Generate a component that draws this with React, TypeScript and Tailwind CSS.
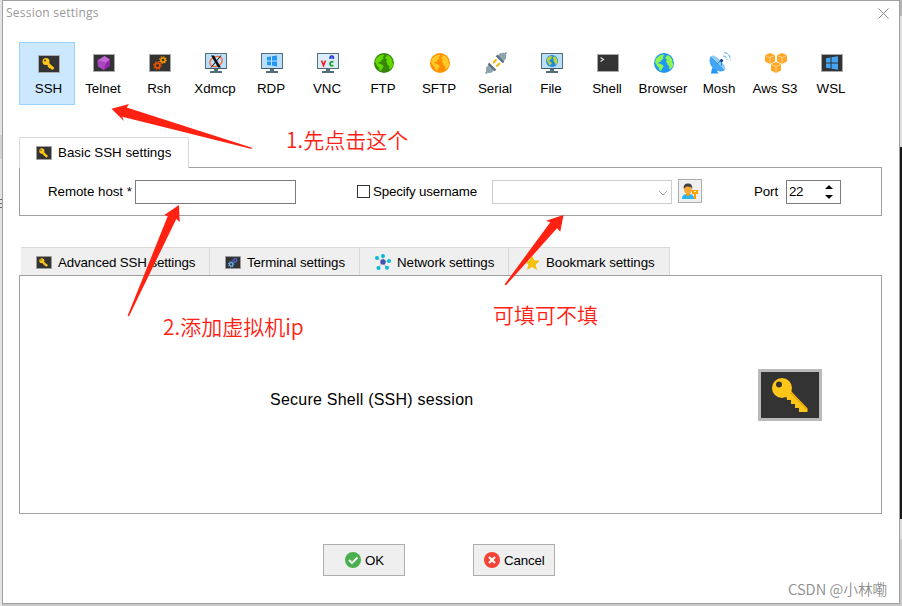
import React from "react";

type IconProps = { className?: string };

const ui = "font-['Liberation_Sans',Arial,sans-serif]";
const cjk = "font-['Noto_Sans_CJK_SC',sans-serif]";

function KeyShape() {
  return (
    <>
      <path d="M28 25 33 22 49.500 39.500V43H41V39H37V35H33V31H29Z" fill="#ffc61a" />
      <path d="M32 23 49 40" stroke="#e5a500" strokeWidth="1.600" />
      <path fillRule="evenodd" d="M24 9a10 10 0 1 0 0 20 10 10 0 0 0 0-20Zm-3 3.500a3 3 0 1 1 0 6 3 3 0 0 1 0-6Z" fill="#ffc61a" />
    </>
  );
}

function KeyIcon({ className = "h-[18px] w-[22px]" }: IconProps) {
  return (
    <svg className={className} viewBox="0 0 64 52" preserveAspectRatio="none" fill="none">
      <rect width="64" height="52" fill="#bababa" />
      <rect x="3" y="3" width="58" height="46" fill="#333" />
      <KeyShape />
    </svg>
  );
}

function SmallKey({ className = "h-[18px] w-[22px]" }: IconProps) {
  return (
    <svg className={className} viewBox="0 0 22 18" preserveAspectRatio="none" fill="none">
      <rect x=".5" y=".5" width="21" height="17" fill="#333" stroke="#aaa" />
      <path d="m8.500 7.500 7 6.500" stroke="#ffc61a" strokeWidth="2.800" />
      <path d="m10 11 2 2m0-1 2 2" stroke="#ffc61a" strokeWidth="1.200" />
      <circle cx="8" cy="6.500" r="3.500" fill="#ffc61a" />
      <circle cx="7" cy="5.500" r=".9" fill="#333" />
    </svg>
  );
}

function Dark({ children }: { children: React.ReactNode }) {
  return (
    <svg className="h-[18px] w-[22px]" viewBox="0 0 22 18" fill="none">
      <rect x=".5" y=".5" width="21" height="17" fill="#333" stroke="#aaa" />
      {children}
    </svg>
  );
}

function GemIcon() {
  return (
    <Dark>
      <path d="m11.500 2 5.500 3.500V12l-6 4-6-3.500-.5-6Z" fill="#9c27b0" />
      <path d="M11.500 2 17 5.500 13 9 4.500 6.500Z" fill="#c266d6" />
      <path d="m13 9 4-3.500V12l-6 4Z" fill="#8e24aa" />
      <path d="M4.500 6.500 13 9l-2 7-6-3.500Z" fill="#ab47bc" />
    </Dark>
  );
}

function GearPair({ a, b }: { a: string; b: string }) {
  return (
    <>
      <circle cx="8.500" cy="11.500" r="3.700" stroke={a} strokeWidth="1.400" strokeDasharray="1.450 1.450" />
      <circle cx="8.500" cy="11.500" r="2.400" stroke={a} strokeWidth="1.700" />
      <circle cx="14" cy="6" r="3.200" stroke={b} strokeWidth="1.300" strokeDasharray="1.250 1.250" />
      <circle cx="14" cy="6" r="2.100" stroke={b} strokeWidth="1.500" />
    </>
  );
}

function Monitor({ children }: { children: React.ReactNode }) {
  return (
    <svg className="h-[20px] w-[22px]" viewBox="0 0 22 20" fill="none">
      <rect x=".5" y=".5" width="21" height="15" fill="#bbdefb" stroke="#546e7a" />
      <path d="M1 15.500h20" stroke="#455a64" />
      <path d="M9 16h4v2h4v2H5v-2h4z" fill="#546e7a" />
      {children}
    </svg>
  );
}

function XIcon() {
  return (
    <Monitor>
      <ellipse cx="11" cy="8.500" rx="6.500" ry="4.800" stroke="#f4703a" strokeWidth="1.400" transform="rotate(-25 11 8.500)" />
      <path d="M6 2.500H9l7 12H13z" fill="#111" />
      <path d="m16 2.500-10 12" stroke="#111" />
    </Monitor>
  );
}

function RdpIcon() {
  return (
    <Monitor>
      <path d="m6 4 4-.6V7.500H6zm5-.8 5-.8v5.100h-5zM6 8.400h4v4.100L6 12zm5 0h5v5l-5-.8z" fill="#2196f3" />
    </Monitor>
  );
}

function VncIcon() {
  return (
    <svg className="h-[20px] w-[22px]" viewBox="0 0 22 20" fill="none">
      <rect x=".5" y=".5" width="21" height="15" fill="#dcecf8" stroke="#546e7a" />
      <path d="M9 16h4v2h4v2H5v-2h4z" fill="#546e7a" />
      <path d="m4.500 7.500 2 5 2-5" stroke="#ee2027" strokeWidth="1.600" />
      <path d="M13 6V4l1-1h1.500l1 1v2M13 4.800h3.500" stroke="#2634dc" strokeWidth="1.300" />
      <path d="M16.300 9.200c-1.500-1-3.300-.3-3.300 1.600s1.800 2.400 3.300 1.500" stroke="#0ca226" strokeWidth="1.700" />
    </svg>
  );
}

function GlobeShape({ sea, land }: { sea: string; land: string }) {
  return (
    <>
      <circle cx="10" cy="10" r="10" fill={sea} />
      <path d="M2 5.500 6 2.200l3.500-.7 1 1.600-2 .9 1.200 1.400-2 1.600-1.500 2.200-1.500-.5-.5 1.500 2 .5 2.500 1.300 1 1.500-1.500 2-1 2-1.400.6-1-3.600L3 13 2 10.500 1 9.500z" fill={land} />
      <path d="m13 2 3 1.500 2.500 3.500-.2 2.500 1 1-.6 3.300-2.700 2.700-1-1.300.3-2.200-1.800-1-.3-2-1.200-1 1-2.500L11 5l1-1z" fill={land} />
    </>
  );
}

function Globe({ sea, land }: { sea: string; land: string }) {
  return (
    <svg className="size-[20px]" viewBox="0 0 20 20" fill="none">
      <GlobeShape sea={sea} land={land} />
    </svg>
  );
}

function FileIcon() {
  return (
    <Monitor>
      <g transform="translate(5 2) scale(.6)">
        <GlobeShape sea="#1e88e5" land="#c0d62e" />
      </g>
    </Monitor>
  );
}

function SerialIcon() {
  return (
    <svg className="size-[22px]" viewBox="0 0 22 22" fill="none">
      <path d="m18 4 3.500-3.500M.5 21.500 4 18" stroke="#90a4ae" strokeWidth="2" />
      <path d="m12 4 3.500-3 3.500-.2 2.200 2.200-.2 3.500L18 10z" fill="#90a4ae" />
      <path d="M4 12.500 1 15.500v3.300l2.200 2.200 3.300-.2L9.500 18z" fill="#90a4ae" />
      <path d="m11.500 3.500 7 7M3.500 11.500l7 7" stroke="#546e7a" strokeWidth="2.200" />
      <path d="m11.500 7.500-3.500 3.500M15 11l-3.500 3.500" stroke="#ffb300" strokeWidth="1.800" />
    </svg>
  );
}

function ShellIcon() {
  return (
    <Dark>
      <path d="m3.500 3.500 3 2-3 2" stroke="#ddd" strokeWidth="1.200" />
    </Dark>
  );
}

function DishIcon() {
  return (
    <svg className="size-[22px]" viewBox="0 0 22 22" fill="none">
      <path d="m3 16-1 5.500h7.500L7 17z" fill="#2196f3" />
      <path d="M2 4C-1 8 1 14 5 17s9 3 11 1z" fill="#42a5f5" />
      <path d="m2 4 14 14c1-2-1-6-5-10S4 2.500 2 4Z" fill="#90caf9" />
      <path d="m8 12 4-4M12.500 14V8" stroke="#1e88e5" />
      <circle cx="12.500" cy="8.500" r="1.600" fill="#0d3c91" />
      <path d="M14 4c2.500 0 4 1.500 4 4M15 .7c4 0 6.300 3 6.300 7" stroke="#64b5f6" strokeWidth="1.100" strokeDasharray="4 1" />
    </svg>
  );
}

function Cube({ x, y }: { x: number; y: number }) {
  return (
    <g transform={`translate(${x} ${y})`}>
      <path d="M5 0 0 2v6.500L5 11l5-2.500V2z" fill="#ffa726" />
      <path d="M.3 2.500 5 4.500l4.700-2M5 4.500V11" stroke="#ffe3b8" strokeWidth=".7" />
    </g>
  );
}

function AwsIcon() {
  return (
    <svg className="h-[20px] w-[22px]" viewBox="0 0 22 20" fill="none">
      <Cube x={0} y={0} />
      <Cube x={12} y={0} />
      <Cube x={6} y={9} />
    </svg>
  );
}

function WslIcon() {
  return (
    <Dark>
      <path d="m5 4.300 4.500-.8v5H5zM10.500 3.300 17 2.200v6.300h-6.500zM5 9.500h4.500v5L5 13.700zm5.500 0H17v6.300l-6.500-1.100z" fill="#42a5f5" />
    </Dark>
  );
}

function NetworkIcon() {
  return (
    <svg className="size-4" viewBox="0 0 16 16" fill="none">
      <path d="M8 8V2m0 6 5.500-1M8 8l4 6M8 8l-5 6M8 8 2 4" stroke="#b0bec5" />
      <g fill="#00bcd4">
        <circle cx="8" cy="2" r="2" />
        <circle cx="14" cy="7" r="2" />
        <circle cx="12" cy="13.700" r="2" />
        <circle cx="3.500" cy="14" r="2" />
        <circle cx="2" cy="4" r="2" />
      </g>
      <circle cx="8" cy="8" r="2.700" fill="#3f51b5" />
    </svg>
  );
}

function StarIcon() {
  return (
    <svg className="h-[15px] w-4" viewBox="0 0 16 15">
      <path d="m8 0 2.200 5.200 5.800.5-4.400 3.700L13 15l-5-3-5 3 1.400-5.600L0 5.700l5.800-.5z" fill="#f4c20d" />
    </svg>
  );
}

function UserKeyIcon() {
  return (
    <svg className="size-4" viewBox="0 0 16 16" fill="none">
      <path d="M0 16c0-4 2-5 6-5s6 1 6 5z" fill="#29b6f6" />
      <path d="M4 9h4v3l-2 1.500L4 12z" fill="#ff9800" />
      <ellipse cx="6" cy="6.500" rx="4" ry="4.500" fill="#ffa938" />
      <path d="M2 6C1 2.500 3 .5 6 .5s5 2 4 5.500L9 4 5 3.500 3 4.500z" fill="#424242" />
      <path d="M10 7h6v4h-2v5h-2v-5h-2z" fill="#ffa000" />
      <path d="M12 8.500h2" stroke="#fff3d4" />
    </svg>
  );
}

const sessions = [
  { name: "Telnet", icon: <GemIcon /> },
  { name: "Rsh", icon: <Dark><GearPair a="#e65100" b="#ff9800" /></Dark> },
  { name: "Xdmcp", icon: <XIcon /> },
  { name: "RDP", icon: <RdpIcon /> },
  { name: "VNC", icon: <VncIcon /> },
  { name: "FTP", icon: <Globe sea="#388509" land="#61d800" /> },
  { name: "SFTP", icon: <Globe sea="#ff8f00" land="#ffc928" /> },
  { name: "Serial", icon: <SerialIcon /> },
  { name: "File", icon: <FileIcon /> },
  { name: "Shell", icon: <ShellIcon /> },
  { name: "Browser", icon: <Globe sea="#2196f3" land="#8df552" /> },
  { name: "Mosh", icon: <DishIcon /> },
  { name: "Aws S3", icon: <AwsIcon /> },
  { name: "WSL", icon: <WslIcon /> },
];

function Toolbar() {
  return (
    <div className="ml-[16px] mt-[17px] flex h-[63px] shrink-0">
      <button className="flex w-[56px] shrink-0 flex-col items-center border border-[#99d1ff] bg-[#cce8ff] pl-[3px] pt-[12px]">
        <SmallKey />
        <span className="mt-[8px] leading-4">SSH</span>
      </button>
      {sessions.map((s) => (
        <button key={s.name} className="flex w-[56px] shrink-0 flex-col items-center pt-[10px]">
          <span className="flex h-[22px] items-center pl-[2px]">{s.icon}</span>
          <span className="mt-[7px] whitespace-nowrap leading-4">{s.name}</span>
        </button>
      ))}
    </div>
  );
}

function Annotations() {
  return (
    <>
      <svg className="pointer-events-none absolute inset-0" width="902" height="606" fill="#ff2112">
        <path d="M111.500 108.700 129 104l-2.300 3.400L252 147.800l-.4 1.300L122.300 116.700 124 121Z" />
        <path d="m179 205-14.700 10 3.400 1.300L127.600 315.800l1.400.4L176.300 219l3.400 3Z" />
        <path d="m563.500 215-17.500 5.700 4.300 1.600L504.500 284.400l1.500.8L557 228.300l3.300 3.500Z" />
      </svg>
      <p className={`absolute left-[286px] top-[125px] whitespace-nowrap text-[21px] font-[350] leading-[28px] text-[#ff2112] ${cjk}`}>1.先点击这个</p>
      <p className={`absolute left-[163px] top-[312px] whitespace-nowrap text-[21px] font-[350] leading-[28px] text-[#ff2112] ${cjk}`}>2.添加虚拟机ip</p>
      <p className={`absolute left-[493px] top-[300px] whitespace-nowrap text-[21px] font-[350] leading-[28px] text-[#ff2112] ${cjk}`}>可填可不填</p>
      <p className={`absolute left-[788px] top-[579px] whitespace-nowrap text-[14.7px] font-[350] leading-[20px] text-[#8c8c8c] ${cjk}`}>CSDN @小林嘞</p>
    </>
  );
}

function LeftEdge() {
  return (
    <div className="flex w-[2px] shrink-0 flex-col bg-[#e4e4e4]">
      <div className="mt-[135px] h-[24px] bg-[#d3d3d3]" />
      <div className="mt-[40px] h-px bg-[#765]" />
      <div className="mt-[3px] h-px bg-[#765]" />
      <div className="mt-[3px] h-px bg-[#765]" />
    </div>
  );
}

function RightEdge() {
  return (
    <div className="flex w-[2px] shrink-0 flex-col bg-[#c8c8c8]">
      <div className="h-[16px] bg-[#b5b5b5]" />
      <div className="h-[131px] bg-[#dedede]" />
      <div className="h-[372px] bg-[#181818]" />
      <div className="h-[20px] bg-[#ddd]" />
    </div>
  );
}

export default function App() {
  return (
    <div className={`relative flex h-[606px] w-[902px] overflow-hidden text-[13.33px] text-black ${ui}`}>
      <LeftEdge />
      <div className="flex h-full w-[898px] shrink-0 flex-col bg-[#c7c7c7]">
        <div className="flex h-[604px] flex-col border border-[#a0a0a0] bg-white">
          <header className="flex h-[24px] shrink-0 justify-between pl-[3px] pr-[10px]">
            <h1 className="font-['Open_Sans',sans-serif] text-[12px] leading-[23px] tracking-[.22px] text-[#999]">Session settings</h1>
            <svg className="mt-[7px] size-[11px]" viewBox="0 0 11 11" stroke="#888">
              <path d="m.5.500 10 10m0-10-10 10" />
            </svg>
          </header>
          <Toolbar />

          <div className="relative z-10 ml-[16px] mt-[32px] flex h-[31px] w-[170px] shrink-0 border border-b-0 border-[#d9d9d9] bg-white pl-[16px] pt-[7px]">
            <SmallKey className="mt-px h-[14px] w-[16px]" />
            <span className="ml-[6px] whitespace-nowrap leading-4">Basic SSH settings</span>
          </div>
          <section className="-mt-px ml-[16px] flex h-[49px] w-[863px] shrink-0 border border-[#a0a0a0]">
            <label className="ml-[28px] mt-[16px] w-[87px] whitespace-nowrap leading-4 tracking-[-.05px]">Remote host *</label>
            <div className="mt-[12px] h-[24px] w-[161px] border border-[#7a7a7a]" />
            <div className="ml-[61px] mt-[17px] size-[13px] border border-[#333]" />
            <label className="ml-[3px] mt-[16px] w-[119px] whitespace-nowrap leading-4 tracking-[-.17px]">Specify username</label>
            <div className="mt-[12px] flex h-[24px] w-[180px] justify-end border border-[#ccc] pr-[3px] pt-[9px]">
              <svg className="h-[6px] w-[10px]" viewBox="0 0 10 6" fill="none" stroke="#aaa">
                <path d="m1 1 4 4 4-4" />
              </svg>
            </div>
            <div className="ml-[6px] mt-[11px] flex size-[24px] items-center justify-center border border-[#adadad] bg-[#efefef]">
              <UserKeyIcon />
            </div>
            <label className="ml-[52px] mt-[16px] w-[32px] leading-4 tracking-[-.1px]">Port</label>
            <div className="mt-[12px] flex h-[24px] w-[55px] justify-between border border-[#7a7a7a] pl-[2px] pr-[7px]">
              <span className="leading-[22px] tracking-[-.3px]">22</span>
              <svg className="mt-[4px] h-[14px] w-[8px]" viewBox="0 0 8 14">
                <path d="m4 0 4 4H0zM0 10h8l-4 4z" />
              </svg>
            </div>
          </section>

          <nav className="ml-[18px] mt-[31px] flex h-[28px] w-[649px] shrink-0 whitespace-nowrap border-r border-t border-[#d9d9d9] bg-[#efefef]">
            <div className="flex w-[189px] border-r border-[#d9d9d9] pl-[15px] pt-[7px]">
              <SmallKey className="mt-px h-[13px] w-[16px]" />
              <span className="ml-[6px] leading-4 tracking-[-.13px]">Advanced SSH settings</span>
            </div>
            <div className="flex w-[150px] border-r border-[#d9d9d9] pl-[15px] pt-[7px]">
              <svg className="mt-px h-[13px] w-[16px]" viewBox="0 0 22 18" preserveAspectRatio="none" fill="none">
                <rect x=".5" y=".5" width="21" height="17" fill="#333" stroke="#aaa" />
                <GearPair a="#64b5f6" b="#5268cf" />
              </svg>
              <span className="ml-[6px] leading-4 tracking-[-.12px]">Terminal settings</span>
            </div>
            <div className="flex w-[149px] border-r border-[#d9d9d9] pl-[15px] pt-[6px]">
              <NetworkIcon />
              <span className="ml-[6px] mt-px leading-4 tracking-[-.08px]">Network settings</span>
            </div>
            <div className="flex pl-[15px] pt-[7px]">
              <StarIcon />
              <span className="ml-[6px] leading-4 tracking-[-.06px]">Bookmark settings</span>
            </div>
          </nav>
          <section className="ml-[16px] flex h-[239px] w-[863px] shrink-0 items-center justify-between border border-[#a0a0a0] pl-[250px] pr-[59px]">
            <h2 className="mt-[10px] text-[16px] leading-5 tracking-[.23px]">Secure Shell (SSH) session</h2>
            <KeyIcon className="h-[52px] w-[64px]" />
          </section>
          <footer className="ml-[320px] mt-[30px] flex gap-[68px]">
            <button className="flex h-[32px] w-[82px] items-center border border-[#adadad] bg-[#efefef] pl-[21px]">
              <svg className="size-4" viewBox="0 0 16 16" fill="none">
                <circle cx="8" cy="8" r="8" fill="#4caf50" />
                <path d="m4 8 3 3 5.500-5.500" stroke="#fff" strokeWidth="1.800" />
              </svg>
              <span className="ml-[4px] mt-px">OK</span>
            </button>
            <button className="flex h-[32px] w-[82px] items-center border border-[#adadad] bg-[#efefef] pl-[10px]">
              <svg className="size-4" viewBox="0 0 16 16" fill="none">
                <circle cx="8" cy="8" r="8" fill="#f44336" />
                <path d="m5 5 6 6m0-6-6 6" stroke="#fff" strokeWidth="2" />
              </svg>
              <span className="ml-[4px] mt-px tracking-[-.15px]">Cancel</span>
            </button>
          </footer>
        </div>
      </div>
      <RightEdge />
      <Annotations />
    </div>
  );
}
